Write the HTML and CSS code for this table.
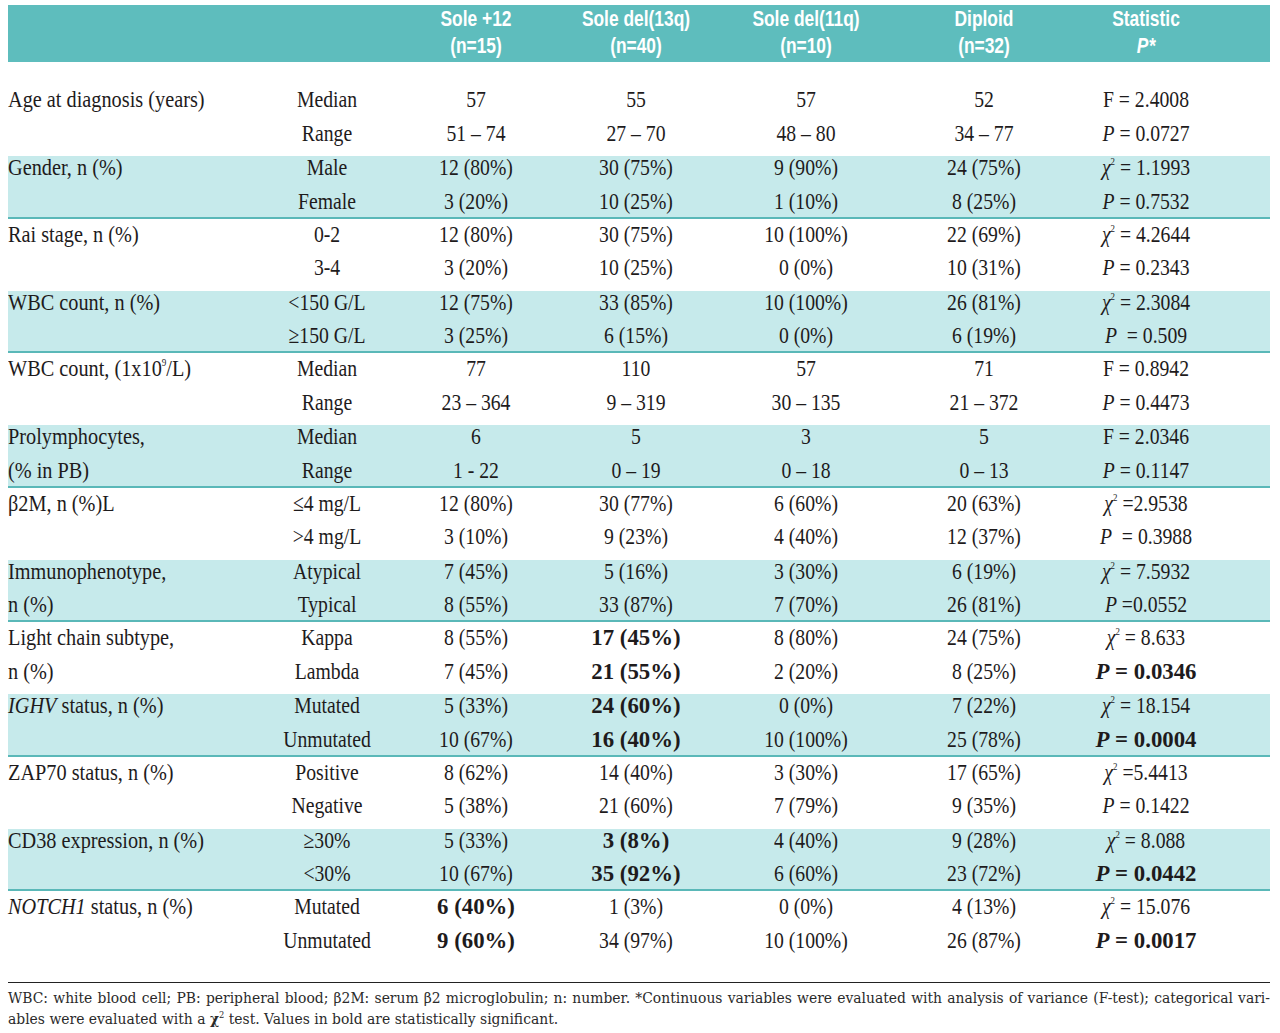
FILE: index.html
```html
<!DOCTYPE html>
<html>
<head>
<meta charset="utf-8">
<link rel="stylesheet" href="styles.css">
</head>
<body>
<div class="page">
  <div class="head row-grid">
    <div></div><div></div>
    <div class="hc">Sole +12<br>(n=15)</div>
    <div class="hc">Sole del(13q)<br>(n=40)</div>
    <div class="hc">Sole del(11q)<br>(n=10)</div>
    <div class="hc">Diploid<br>(n=32)</div>
    <div class="hc">Statistic<br><i>P*</i></div>
  </div>

  <div class="group first">
    <div class="lab">Age at diagnosis (years)</div><div class="c">Median</div><div class="c">57</div><div class="c">55</div><div class="c">57</div><div class="c">52</div><div class="c">F = 2.4008</div>
    <div class="lab"></div><div class="c">Range</div><div class="c">51 – 74</div><div class="c">27 – 70</div><div class="c">48 – 80</div><div class="c">34 – 77</div><div class="c"><i>P</i> = 0.0727</div>
  </div>

  <div class="group shaded">
    <div class="lab">Gender, n (%)</div><div class="c">Male</div><div class="c">12 (80%)</div><div class="c">30 (75%)</div><div class="c">9 (90%)</div><div class="c">24 (75%)</div><div class="c"><i>χ</i><sup>2</sup> = 1.1993</div>
    <div class="lab"></div><div class="c">Female</div><div class="c">3 (20%)</div><div class="c">10 (25%)</div><div class="c">1 (10%)</div><div class="c">8 (25%)</div><div class="c"><i>P</i> = 0.7532</div>
  </div>

  <div class="group">
    <div class="lab">Rai stage, n (%)</div><div class="c">0-2</div><div class="c">12 (80%)</div><div class="c">30 (75%)</div><div class="c">10 (100%)</div><div class="c">22 (69%)</div><div class="c"><i>χ</i><sup>2</sup> = 4.2644</div>
    <div class="lab"></div><div class="c">3-4</div><div class="c">3 (20%)</div><div class="c">10 (25%)</div><div class="c">0 (0%)</div><div class="c">10 (31%)</div><div class="c"><i>P</i> = 0.2343</div>
  </div>

  <div class="group shaded">
    <div class="lab">WBC count, n (%)</div><div class="c">&lt;150 G/L</div><div class="c">12 (75%)</div><div class="c">33 (85%)</div><div class="c">10 (100%)</div><div class="c">26 (81%)</div><div class="c"><i>χ</i><sup>2</sup> = 2.3084</div>
    <div class="lab"></div><div class="c">≥150 G/L</div><div class="c">3 (25%)</div><div class="c">6 (15%)</div><div class="c">0 (0%)</div><div class="c">6 (19%)</div><div class="c"><i>P</i>&nbsp; = 0.509</div>
  </div>

  <div class="group">
    <div class="lab">WBC count, (1x10<sup>9</sup>/L)</div><div class="c">Median</div><div class="c">77</div><div class="c">110</div><div class="c">57</div><div class="c">71</div><div class="c">F = 0.8942</div>
    <div class="lab"></div><div class="c">Range</div><div class="c">23 – 364</div><div class="c">9 – 319</div><div class="c">30 – 135</div><div class="c">21 – 372</div><div class="c"><i>P</i> = 0.4473</div>
  </div>

  <div class="group shaded">
    <div class="lab">Prolymphocytes,</div><div class="c">Median</div><div class="c">6</div><div class="c">5</div><div class="c">3</div><div class="c">5</div><div class="c">F = 2.0346</div>
    <div class="lab">(% in PB)</div><div class="c">Range</div><div class="c">1 - 22</div><div class="c">0 – 19</div><div class="c">0 – 18</div><div class="c">0 – 13</div><div class="c"><i>P</i> = 0.1147</div>
  </div>

  <div class="group">
    <div class="lab">β2M, n (%)L</div><div class="c">≤4 mg/L</div><div class="c">12 (80%)</div><div class="c">30 (77%)</div><div class="c">6 (60%)</div><div class="c">20 (63%)</div><div class="c"><i>χ</i><sup>2</sup> =2.9538</div>
    <div class="lab"></div><div class="c">&gt;4 mg/L</div><div class="c">3 (10%)</div><div class="c">9 (23%)</div><div class="c">4 (40%)</div><div class="c">12 (37%)</div><div class="c"><i>P</i>&nbsp; = 0.3988</div>
  </div>

  <div class="group shaded">
    <div class="lab">Immunophenotype,</div><div class="c">Atypical</div><div class="c">7 (45%)</div><div class="c">5 (16%)</div><div class="c">3 (30%)</div><div class="c">6 (19%)</div><div class="c"><i>χ</i><sup>2</sup> = 7.5932</div>
    <div class="lab">n (%)</div><div class="c">Typical</div><div class="c">8 (55%)</div><div class="c">33 (87%)</div><div class="c">7 (70%)</div><div class="c">26 (81%)</div><div class="c"><i>P</i> =0.0552</div>
  </div>

  <div class="group">
    <div class="lab">Light chain subtype,</div><div class="c">Kappa</div><div class="c">8 (55%)</div><div class="c b">17 (45%)</div><div class="c">8 (80%)</div><div class="c">24 (75%)</div><div class="c"><i>χ</i><sup>2</sup> = 8.633</div>
    <div class="lab">n (%)</div><div class="c">Lambda</div><div class="c">7 (45%)</div><div class="c b">21 (55%)</div><div class="c">2 (20%)</div><div class="c">8 (25%)</div><div class="c b"><i>P</i> = 0.0346</div>
  </div>

  <div class="group shaded">
    <div class="lab"><i>IGHV</i> status, n (%)</div><div class="c">Mutated</div><div class="c">5 (33%)</div><div class="c b">24 (60%)</div><div class="c">0 (0%)</div><div class="c">7 (22%)</div><div class="c"><i>χ</i><sup>2</sup> = 18.154</div>
    <div class="lab"></div><div class="c">Unmutated</div><div class="c">10 (67%)</div><div class="c b">16 (40%)</div><div class="c">10 (100%)</div><div class="c">25 (78%)</div><div class="c b"><i>P</i> = 0.0004</div>
  </div>

  <div class="group">
    <div class="lab">ZAP70 status, n (%)</div><div class="c">Positive</div><div class="c">8 (62%)</div><div class="c">14 (40%)</div><div class="c">3 (30%)</div><div class="c">17 (65%)</div><div class="c"><i>χ</i><sup>2</sup> =5.4413</div>
    <div class="lab"></div><div class="c">Negative</div><div class="c">5 (38%)</div><div class="c">21 (60%)</div><div class="c">7 (79%)</div><div class="c">9 (35%)</div><div class="c"><i>P</i> = 0.1422</div>
  </div>

  <div class="group shaded">
    <div class="lab">CD38 expression, n (%)</div><div class="c">≥30%</div><div class="c">5 (33%)</div><div class="c b">3 (8%)</div><div class="c">4 (40%)</div><div class="c">9 (28%)</div><div class="c"><i>χ</i><sup>2</sup> = 8.088</div>
    <div class="lab"></div><div class="c">&lt;30%</div><div class="c">10 (67%)</div><div class="c b">35 (92%)</div><div class="c">6 (60%)</div><div class="c">23 (72%)</div><div class="c b"><i>P</i> = 0.0442</div>
  </div>

  <div class="group last">
    <div class="lab"><i>NOTCH1</i> status, n (%)</div><div class="c">Mutated</div><div class="c b">6 (40%)</div><div class="c">1 (3%)</div><div class="c">0 (0%)</div><div class="c">4 (13%)</div><div class="c"><i>χ</i><sup>2</sup> = 15.076</div>
    <div class="lab"></div><div class="c">Unmutated</div><div class="c b">9 (60%)</div><div class="c">34 (97%)</div><div class="c">10 (100%)</div><div class="c">26 (87%)</div><div class="c b"><i>P</i> = 0.0017</div>
  </div>

  <div class="foot">
    <div class="foot-line1">WBC: white blood cell; PB: peripheral blood; β2M: serum β2 microglobulin; n: number. *Continuous variables were evaluated with analysis of variance (F-test); categorical vari-</div>
    <div class="foot-line2">ables were evaluated with a <b>χ</b><sup>2</sup> test. Values in bold are statistically significant.</div>
  </div>
</div>
</body>
</html>
```

FILE: styles.css
```css
html, body {
  margin: 0;
  padding: 0;
  background: #ffffff;
}

.page {
  width: 1262px;
  padding: 5px 10px 0 8px;
  color: #1e1b1c;
  font-family: "Liberation Serif", "Times New Roman", serif;
  font-size: 24px;
}

.row-grid,
.group {
  display: grid;
  grid-template-columns: 259px 120px 178px 142px 198px 158px 166px;
}

.head {
  background: #5ebdbd;
  height: 57px;
  padding-top: 0;
  box-sizing: border-box;
}

.hc {
  color: #ffffff;
  font-family: "Liberation Sans", Arial, sans-serif;
  font-weight: bold;
  font-size: 22px;
  line-height: 27px;
  text-align: center;
  white-space: nowrap;
  transform: scaleX(0.79);
  transform-origin: center;
}

.group {
  grid-template-rows: 24px 24px;
  row-gap: 9.5px;
  line-height: 24px;
  padding: 3px 0 11.5px 0;
}

.group.first {
  margin-top: 22px;
  padding-bottom: 11.5px;
}

.group.shaded {
  background: #c6eaeb;
  padding: 0 0 3px 0;
  border-bottom: 2px solid #5ab8b8;
}

.group.shaded .lab,
.group.shaded .c {
  position: relative;
  top: -1px;
}

.lab {
  white-space: nowrap;
  transform: scaleX(0.845);
  transform-origin: left center;
}

.c {
  text-align: center;
  white-space: nowrap;
  transform: scaleX(0.82);
  transform-origin: center;
}

.c.b {
  font-weight: bold;
  transform: scaleX(0.95);
}

sup {
  font-size: 0.45em;
  line-height: 0;
  vertical-align: 0.9em;
}

.foot {
  margin-top: 19px;
  border-top: 1px solid #222;
  padding-top: 5px;
  font-family: "DejaVu Serif", serif;
  font-size: 13.9px;
  line-height: 21px;
  color: #2a2a2a;
}

.foot-line1 {
  text-align: justify;
  text-align-last: justify;
  white-space: nowrap;
}

.foot-line2 {
  text-align: left;
}

.foot sup {
  font-size: 0.6em;
  vertical-align: 0.7em;
}
```
